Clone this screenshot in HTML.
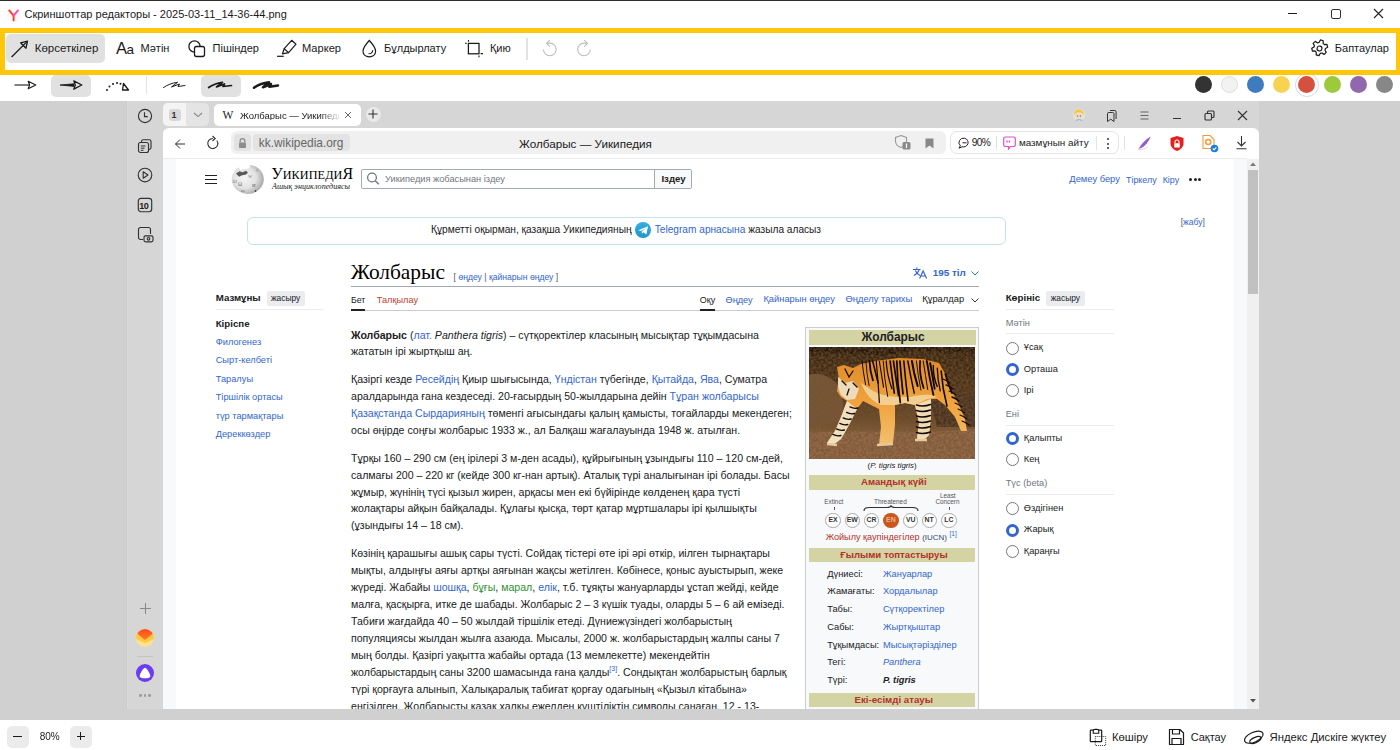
<!DOCTYPE html><html><head><meta charset="utf-8"><style>
html,body{margin:0;padding:0}
body{width:1400px;height:750px;position:relative;overflow:hidden;background:#fff;font-family:"Liberation Sans",sans-serif}
.t{position:absolute;white-space:nowrap;line-height:1}
.r{position:absolute}
a{color:inherit;text-decoration:none}
</style></head><body>
<div class="r" style="left:0px;top:0px;width:1400px;height:1px;background:#2e2e2e;"></div>
<svg class="r" style="left:6px;top:7px;" width="16" height="16" viewBox="0 0 16 16" fill="none"><circle cx="7.7" cy="8" r="7.5" fill="#f9f9f9"/><path d="M3.2 3.4L7.6 8.6V13.4" stroke="#ff3a24" stroke-width="1.9" stroke-linecap="round" stroke-linejoin="round" fill="none"/><path d="M12 3.4L7.6 8.6" stroke="#ff4d9a" stroke-width="1.9" stroke-linecap="round"/></svg>
<div class="t" style="left:24.5px;top:9.09px;font-size:11px;color:#1a1a1a;font-weight:400;font-family:'Liberation Sans';font-style:normal;">Скриншоттар редакторы - 2025-03-11_14-36-44.png</div>
<div class="r" style="left:1288px;top:13px;width:9px;height:1px;background:#1a1a1a;"></div>
<div class="r" style="left:1331px;top:9px;width:8px;height:8px;background:transparent;border:1px solid #333;border-radius:2px"></div>
<svg class="r" style="left:1373px;top:8px;" width="11" height="11" viewBox="0 0 11 11" fill="none"><path d="M1 1L10 10M10 1L1 10" stroke="#222" stroke-width="1.1"/></svg>
<div class="r" style="left:0px;top:28px;width:1400px;height:47px;background:transparent;box-sizing:border-box;border:5px solid #ffc70c;border-right-width:4px"></div>
<div class="r" style="left:6px;top:34px;width:99px;height:29px;background:#e1e1e1;border-radius:5px"></div>
<svg class="r" style="left:10px;top:39px;" width="20" height="20" viewBox="0 0 20 20" fill="none"><path d="M1.6 18L17 2.6" stroke="#1a1a1a" stroke-width="1.3"/><path d="M17.5 2.2L16 9.2L10.6 3.8Z" stroke="#1a1a1a" stroke-width="1.3" stroke-linejoin="round" fill="none"/></svg>
<div class="t" style="left:34.7px;top:42.77px;font-size:11.5px;color:#1a1a1a;font-weight:400;font-family:'Liberation Sans';font-style:normal;">Көрсеткілер</div>
<div class="t" style="left:116px;top:40.03px;font-size:16.5px;color:#1a1a1a;font-weight:400;font-family:'Liberation Sans';font-style:normal;transform:scaleX(1.0)">A</div>
<div class="t" style="left:126.5px;top:42.57px;font-size:13.5px;color:#1a1a1a;font-weight:400;font-family:'Liberation Sans';font-style:normal;">a</div>
<div class="t" style="left:140.6px;top:43.09px;font-size:11px;color:#1a1a1a;font-weight:400;font-family:'Liberation Sans';font-style:normal;">Мәтін</div>
<svg class="r" style="left:188px;top:40px;" width="18" height="18" viewBox="0 0 18 18" fill="none"><circle cx="6.5" cy="6.5" r="5.6" stroke="#1a1a1a" stroke-width="1.3"/><rect x="6.5" y="6.5" width="10" height="10" rx="2" fill="#fff" stroke="#1a1a1a" stroke-width="1.3"/></svg>
<div class="t" style="left:212.6px;top:43.09px;font-size:11px;color:#1a1a1a;font-weight:400;font-family:'Liberation Sans';font-style:normal;">Пішіндер</div>
<svg class="r" style="left:275px;top:38px;" width="24" height="21" viewBox="0 0 24 21" fill="none"><path d="M16.7 2.3L21 6.2L13.6 14.6L9.2 10.7Z" stroke="#1a1a1a" stroke-width="1.2" stroke-linejoin="round"/><path d="M9.2 10.7L7.5 15.8L13.6 14.6" stroke="#1a1a1a" stroke-width="1.2" stroke-linejoin="round"/><path d="M2.1 18.3H8.7" stroke="#1a1a1a" stroke-width="1.2"/></svg>
<div class="t" style="left:302px;top:42.50px;font-size:11.1px;color:#1a1a1a;font-weight:400;font-family:'Liberation Sans';font-style:normal;">Маркер</div>
<svg class="r" style="left:360px;top:39px;" width="17" height="20" viewBox="0 0 17 20" fill="none"><path d="M9.3 1.5C9.3 1.5 3 8.2 3 12.3C3 15.6 5.8 17.8 9.3 17.8C12.8 17.8 15.6 15.6 15.6 12.3C15.6 8.2 9.3 1.5 9.3 1.5Z" stroke="#1a1a1a" stroke-width="1.2"/><path d="M8.5 14.8C10.8 14.8 12.6 13.2 12.8 11.2" stroke="#1a1a1a" stroke-width="1.1"/></svg>
<div class="t" style="left:384px;top:43.09px;font-size:11px;color:#1a1a1a;font-weight:400;font-family:'Liberation Sans';font-style:normal;">Бұлдырлату</div>
<svg class="r" style="left:464px;top:39px;" width="20" height="20" viewBox="0 0 20 20" fill="none"><rect x="4.4" y="4.4" width="10.6" height="10.4" stroke="#1a1a1a" stroke-width="1.25"/><path d="M4.5 1V2.8M1 4.3H2.8M16.6 14.6H19M15 16.4V18.3" stroke="#1a1a1a" stroke-width="1.1"/></svg>
<div class="t" style="left:489.9px;top:42.99px;font-size:11px;color:#1a1a1a;font-weight:400;font-family:'Liberation Sans';font-style:normal;">Қию</div>
<div class="r" style="left:526px;top:38px;width:1.5px;height:22px;background:#e3e3e3;"></div>
<svg class="r" style="left:541px;top:40px;" width="17" height="17" viewBox="0 0 17 17" fill="none"><path d="M2.5 9.4A6.3 6.3 0 1 0 8.8 3.1H5.6M9 0.2L5.6 3.3L9 6.6" stroke="#bdbdbd" stroke-width="1.1" stroke-linejoin="round" fill="none"/></svg>
<svg class="r" style="left:576px;top:40px;" width="17" height="17" viewBox="0 0 17 17" fill="none"><path d="M14.3 9.4A6.3 6.3 0 1 1 8.2 3.1H11.6M8.2 0.2L11.6 3.3L8.2 6.6" stroke="#bdbdbd" stroke-width="1.1" stroke-linejoin="round" fill="none"/></svg>
<svg class="r" style="left:1310px;top:39px;" width="19" height="19" viewBox="0 0 19 19" fill="none"><g transform="rotate(16 9.5 9.5) translate(9.5 9.5) scale(1.06) translate(-9.5 -9.5)"><path d="M8.1 1.5h2.8l.5 2.3 1.6.9 2.2-.8 1.4 2.4-1.7 1.6v1.8l1.7 1.6-1.4 2.4-2.2-.8-1.6.9-.5 2.3H8.1l-.5-2.3-1.6-.9-2.2.8-1.4-2.4 1.7-1.6V8.1L2.4 6.5l1.4-2.4 2.2.8 1.6-.9z" stroke="#1a1a1a" stroke-width="1.15" stroke-linejoin="round"/><circle cx="9.5" cy="9.5" r="2.3" stroke="#1a1a1a" stroke-width="1.1"/></g></svg>
<div class="t" style="left:1334.8px;top:43.09px;font-size:11px;color:#1a1a1a;font-weight:400;font-family:'Liberation Sans';font-style:normal;">Баптаулар</div>
<div class="r" style="left:51px;top:75px;width:40px;height:22px;background:#e1e1e1;border-radius:5px"></div>
<div class="r" style="left:201px;top:75px;width:40px;height:22px;background:#e1e1e1;border-radius:5px"></div>
<div class="r" style="left:145.5px;top:76px;width:1px;height:18px;background:#e3e3e3;"></div>
<svg class="r" style="left:13px;top:78px;" width="26" height="14" viewBox="0 0 26 14" fill="none"><path d="M1.5 7H16" stroke="#1a1a1a" stroke-width="1.1"/><path d="M15.2 3.2L22.8 7L15.2 10.8L16.6 7Z" stroke="#1a1a1a" stroke-width="1.1" stroke-linejoin="round"/></svg>
<svg class="r" style="left:59px;top:78px;" width="26" height="14" viewBox="0 0 26 14" fill="none"><path d="M1 7L15 5.8V8.4Z" fill="#1a1a1a" stroke="#1a1a1a" stroke-width="0.8" stroke-linejoin="round"/><path d="M14.8 2.8L22.8 7L14.8 11.2L16.3 7Z" stroke="#1a1a1a" stroke-width="1.3" stroke-linejoin="round"/></svg>
<svg class="r" style="left:105px;top:77px;" width="26" height="16" viewBox="0 0 26 16" fill="none"><circle cx="2" cy="13" r="1" fill="#1a1a1a"/><circle cx="4.5" cy="9.5" r="1" fill="#1a1a1a"/><circle cx="8" cy="7" r="1" fill="#1a1a1a"/><circle cx="12" cy="6" r="1" fill="#1a1a1a"/><circle cx="15.5" cy="6.8" r="1" fill="#1a1a1a"/><path d="M18.5 6.5L23.5 13H17.5Z" stroke="#1a1a1a" stroke-width="1.3" stroke-linejoin="round"/></svg>
<svg class="r" style="left:160px;top:78px;" width="28" height="14" viewBox="0 0 28 14" fill="none"><path d="M3.5 9.5C7 7 12 5 17.5 4.3L11.5 9L19.5 6L18 8.5L25 7.5" stroke="#1a1a1a" stroke-width="1" stroke-linecap="round" stroke-linejoin="round"/></svg>
<svg class="r" style="left:207px;top:78px;" width="28" height="14" viewBox="0 0 28 14" fill="none"><path d="M1.6 9.5C5 7 10 5 15.5 4.3L9.5 9L17.5 6L16 8.5L24.5 7.5" stroke="#1a1a1a" stroke-width="1.7" stroke-linecap="round" stroke-linejoin="round"/></svg>
<svg class="r" style="left:252px;top:78px;" width="30" height="14" viewBox="0 0 30 14" fill="none"><path d="M2 9.8C6 7 11 5 17 4.3L11 9.3L19 6L17.5 8.8L26 7.5" stroke="#1a1a1a" stroke-width="2.5" stroke-linecap="round" stroke-linejoin="round"/></svg>
<div class="r" style="left:1195.1px;top:76.3px;width:17px;height:17px;background:#333333;border-radius:50%;"></div>
<div class="r" style="left:1221.0px;top:76.3px;width:17px;height:17px;background:#f2f2f2;border-radius:50%;border:1px solid #dedede;box-sizing:border-box;"></div>
<div class="r" style="left:1246.8px;top:76.3px;width:17px;height:17px;background:#3f7bbf;border-radius:50%;"></div>
<div class="r" style="left:1272.5px;top:76.3px;width:17px;height:17px;background:#f8d352;border-radius:50%;"></div>
<div class="r" style="left:1298.2px;top:76.3px;width:17px;height:17px;background:#d6503f;border-radius:50%;"></div>
<div class="r" style="left:1323.9px;top:76.3px;width:17px;height:17px;background:#9dc93c;border-radius:50%;"></div>
<div class="r" style="left:1349.7px;top:76.3px;width:17px;height:17px;background:#9168ad;border-radius:50%;"></div>
<div class="r" style="left:1375.5px;top:76.3px;width:17px;height:17px;background:#878787;border-radius:50%;"></div>
<div class="r" style="left:1294.9px;top:72.9px;width:23.7px;height:23.7px;background:transparent;border-radius:50%;box-sizing:border-box;border:1.5px solid #d9d9d9"></div>
<div class="r" style="left:0px;top:73px;width:1400px;height:2px;background:#ffc70c;"></div>
<div class="r" style="left:0px;top:101px;width:1400px;height:619px;background:#d0d0d0;"></div>
<div class="r" style="left:7px;top:725.7px;width:22px;height:22px;background:#ebebeb;border-radius:5px"></div>
<div class="r" style="left:13px;top:736px;width:9px;height:1.3px;background:#1a1a1a;"></div>
<div class="t" style="left:39.7px;top:732.13px;font-size:10px;color:#1a1a1a;font-weight:400;font-family:'Liberation Sans';font-style:normal;transform:scaleY(1.15);transform-origin:0 85%">80%</div>
<div class="r" style="left:70.2px;top:725.7px;width:22px;height:22px;background:#ebebeb;border-radius:5px"></div>
<div class="r" style="left:76.5px;top:736px;width:8.6px;height:1.3px;background:#1a1a1a;"></div>
<div class="r" style="left:80.2px;top:731.7px;width:1.3px;height:8.6px;background:#1a1a1a;"></div>
<svg class="r" style="left:1088px;top:728px;" width="20" height="20" viewBox="0 0 20 20" fill="none"><rect x="2.3" y="2.2" width="11.4" height="11.5" rx="0.8" stroke="#1a1a1a" stroke-width="1.2"/><path d="M5.2 5.3V3.2A1.8 1.8 0 0 1 7 1.4H9A1.8 1.8 0 0 1 10.8 3.2V5.3Z" fill="#fff" stroke="#1a1a1a" stroke-width="1.1"/><path d="M7.3 8.5H17.7V17.5H7.3Z" stroke="#1a1a1a" stroke-width="1" stroke-dasharray="1 1" opacity="0.85"/></svg>
<div class="t" style="left:1112px;top:731.72px;font-size:11.2px;color:#1a1a1a;font-weight:400;font-family:'Liberation Sans';font-style:normal;">Көшіру</div>
<svg class="r" style="left:1168px;top:728px;" width="17" height="18" viewBox="0 0 17 18" fill="none"><path d="M1.5 1.5H12L15.5 5V16.5H1.5Z" stroke="#1a1a1a" stroke-width="1.2" stroke-linejoin="round"/><path d="M4.5 1.5V6H11.5V1.5" stroke="#1a1a1a" stroke-width="1.2"/><path d="M4 16.5V10.5H13V16.5" stroke="#1a1a1a" stroke-width="1.2"/></svg>
<div class="t" style="left:1190.7px;top:731.89px;font-size:11px;color:#1a1a1a;font-weight:400;font-family:'Liberation Sans';font-style:normal;">Сақтау</div>
<svg class="r" style="left:1243px;top:729px;" width="22" height="16" viewBox="0 0 22 16" fill="none"><ellipse cx="10.8" cy="8.2" rx="10" ry="4.9" transform="rotate(-24 10.8 8.2)" stroke="#1a1a1a" stroke-width="1.2"/><ellipse cx="12.4" cy="11" rx="6" ry="2.6" transform="rotate(-24 12.4 11)" stroke="#1a1a1a" stroke-width="1.1"/></svg>
<div class="t" style="left:1269.5px;top:731.63px;font-size:11.3px;color:#1a1a1a;font-weight:400;font-family:'Liberation Sans';font-style:normal;">Яндекс Дискіге жүктеу</div>
<div class="r" style="left:126px;top:101px;width:1133px;height:608px;background:#d6d6d6;"></div>
<div class="r" style="left:126px;top:101px;width:1px;height:608px;background:#cccccc;"></div>
<div class="r" style="left:127px;top:101px;width:1px;height:608px;background:#dadada;"></div>
<div class="r" style="left:163px;top:128px;width:1096px;height:581px;background:#fff;border-radius:6px 6px 0 0"></div>
<div class="r" style="left:163px;top:157.5px;width:1084px;height:1px;background:#ececec;"></div>
<div class="r" style="left:163px;top:158.5px;width:12.6px;height:551px;background:#f8f9fa;"></div>
<div class="r" style="left:1234px;top:158.5px;width:13px;height:551px;background:#f8f9fa;"></div>
<div class="r" style="left:1247px;top:158.5px;width:12px;height:551px;background:#f0f0f0;"></div>
<div class="r" style="left:1247.8px;top:170.3px;width:10.2px;height:124px;background:#c1c1c1;"></div>
<svg class="r" style="left:1249px;top:161px;" width="8" height="6" viewBox="0 0 8 6" fill="none"><path d="M1 5L4 1.5L7 5Z" fill="#777"/></svg>
<svg class="r" style="left:1249px;top:698px;" width="8" height="6" viewBox="0 0 8 6" fill="none"><path d="M1 1L4 4.5L7 1Z" fill="#555"/></svg>
<svg class="r" style="left:137px;top:108px;" width="16" height="16" viewBox="0 0 16 16" fill="none"><circle cx="8" cy="8" r="6.6" stroke="#333" stroke-width="1.15" fill="none"/><path d="M7.5 4.2V8.6H10.8" stroke="#333" stroke-width="1.15" fill="none"/></svg>
<svg class="r" style="left:137px;top:138px;" width="17" height="17" viewBox="0 0 17 17" fill="none"><rect x="1.5" y="4.5" width="10" height="10" rx="2" stroke="#333" stroke-width="1.15" fill="none"/><path d="M4.5 4.5V3.5A1.8 1.8 0 0 1 6.3 1.7H12.2A1.8 1.8 0 0 1 14 3.5V9.5A1.8 1.8 0 0 1 12.2 11.3H11.5" stroke="#333" stroke-width="1.15" fill="none"/><path d="M3.8 8H8.5M3.8 10.2H7.5M3.8 12.3H6.5" stroke="#333" stroke-width="1"/></svg>
<svg class="r" style="left:137px;top:167px;" width="16" height="16" viewBox="0 0 16 16" fill="none"><circle cx="8" cy="8" r="6.8" stroke="#333" stroke-width="1.15" fill="none"/><path d="M6.2 4.8L11 8L6.2 11.2Z" stroke="#333" stroke-width="1.15" fill="none" stroke-linejoin="round"/></svg>
<svg class="r" style="left:137px;top:197px;" width="16" height="16" viewBox="0 0 16 16" fill="none"><rect x="1.3" y="1.3" width="13.4" height="13.4" rx="2.6" stroke="#333" stroke-width="1.15" fill="none"/></svg>
<div class="t" style="left:139.3px;top:201.58px;font-size:9px;color:#222;font-weight:700;font-family:'Liberation Sans';font-style:normal;letter-spacing:-0.6px;">10</div>
<svg class="r" style="left:137px;top:226px;" width="17" height="17" viewBox="0 0 17 17" fill="none"><path d="M6 13.5H3.5A2 2 0 0 1 1.5 11.5V3.5A2 2 0 0 1 3.5 1.5H11.5A2 2 0 0 1 13.5 3.5V8" stroke="#333" stroke-width="1.15" fill="none"/><rect x="7" y="9.8" width="9" height="6" rx="1.5" stroke="#333" stroke-width="1.15" fill="none"/><circle cx="11.5" cy="12.8" r="1.3" stroke="#333" stroke-width="1.15" fill="none"/></svg>
<svg class="r" style="left:139px;top:602px;" width="13" height="13" viewBox="0 0 13 13" fill="none"><path d="M6.5 1V12M1 6.5H12" stroke="#8a8a8a" stroke-width="1.1"/></svg>
<svg class="r" style="left:136px;top:629px;" width="18" height="18" viewBox="0 0 18 18" fill="none"><defs><clipPath id="mc"><circle cx="9" cy="9" r="9"/></clipPath><linearGradient id="mg" x1="0" y1="0" x2="0" y2="1"><stop offset="0" stop-color="#ff4a1c"/><stop offset="1" stop-color="#ff7a22"/></linearGradient></defs><g clip-path="url(#mc)"><rect width="18" height="18" fill="#ffe08c"/><path d="M0 3L9 10.5L18 3V10L9 14L0 10Z" fill="#ffc940"/><path d="M0 0H18V3.5L9 11L0 3.5Z" fill="url(#mg)"/></g></svg>
<div class="r" style="left:137px;top:655.5px;width:16px;height:1px;background:#c4c4c4;"></div>
<svg class="r" style="left:136px;top:664px;" width="18" height="18" viewBox="0 0 18 18" fill="none"><circle cx="9" cy="9" r="9" fill="#6a3cf2"/><path d="M9 3.8C10.6 3.8 14.3 9.8 14.3 12C14.3 13.9 12 14.3 9 14.3C6 14.3 3.7 13.9 3.7 12C3.7 9.8 7.4 3.8 9 3.8Z" fill="#fff"/></svg>
<div class="r" style="left:138.9px;top:694px;width:2.8px;height:2.8px;background:#9a9a9a;border-radius:50%"></div>
<div class="r" style="left:143.5px;top:694px;width:2.8px;height:2.8px;background:#9a9a9a;border-radius:50%"></div>
<div class="r" style="left:148.1px;top:694px;width:2.8px;height:2.8px;background:#9a9a9a;border-radius:50%"></div>
<div class="r" style="left:163px;top:103.4px;width:46px;height:23px;background:#e4e4e4;border-radius:5px"></div>
<div class="r" style="left:163px;top:103.4px;width:23px;height:23px;background:#f4f4f4;border-radius:5px 0 0 5px"></div>
<div class="r" style="left:168.6px;top:109px;width:12px;height:12px;background:#d8d8d8;border-radius:3px"></div>
<div class="t" style="left:171.4px;top:110.98px;font-size:9px;color:#333;font-weight:700;font-family:'Liberation Sans';font-style:normal;">1</div>
<svg class="r" style="left:193px;top:112px;" width="10" height="6" viewBox="0 0 10 6" fill="none"><path d="M1 1L5 4.6L9 1" stroke="#888" stroke-width="1.1"/></svg>
<div class="r" style="left:213.6px;top:103.6px;width:147px;height:22.8px;background:#fff;border-radius:5px"></div>
<div class="t" style="left:222.5px;top:109.87px;font-size:11.5px;color:#222;font-weight:400;font-family:'Liberation Serif';font-style:normal;letter-spacing:-1.5px">W</div>
<div class="t" style="left:240px;top:110.86px;font-size:9.5px;color:#222;font-weight:400;font-family:'Liberation Sans';font-style:normal;width:101px;overflow:hidden;-webkit-mask-image:linear-gradient(90deg,#000 80%,transparent)">Жолбарыс — Уикипеди</div>
<svg class="r" style="left:344px;top:110.5px;" width="8" height="8" viewBox="0 0 8 8" fill="none"><path d="M1 1L7 7M7 1L1 7" stroke="#555" stroke-width="0.9"/></svg>
<div class="r" style="left:365.7px;top:106.6px;width:15.4px;height:15.4px;background:#e9e9e9;border-radius:50%"></div>
<svg class="r" style="left:368.4px;top:109.3px;" width="10" height="10" viewBox="0 0 10 10" fill="none"><path d="M5 0.5V9.5M0.5 5H9.5" stroke="#333" stroke-width="1.1"/></svg>
<svg class="r" style="left:1072px;top:108px;" width="14" height="14" viewBox="0 0 14 14" fill="none"><circle cx="7" cy="7" r="6.2" fill="#e9e2cf"/><path d="M2 7.5C1.8 3.5 4 1.5 7 1.5C10 1.5 12.2 3.5 12 7.5C11 5.5 9.5 4.5 7 4.5C4.5 4.5 3 5.5 2 7.5Z" fill="#f0c94a"/><ellipse cx="7" cy="8.2" rx="3.6" ry="3.8" fill="#f6dcc0"/><circle cx="5.6" cy="8" r="0.8" fill="#3b82c4"/><circle cx="8.4" cy="8" r="0.8" fill="#3b82c4"/><path d="M4 12.5C5 11.5 9 11.5 10 12.5" stroke="#7fb3d8" stroke-width="1.2"/></svg>
<svg class="r" style="left:1105px;top:108.5px;" width="13" height="14" viewBox="0 0 13 14" fill="none"><path d="M2.5 4.8A1.3 1.3 0 0 1 3.8 3.5H7.7A1.3 1.3 0 0 1 9 4.8V12.5L5.75 10.2L2.5 12.5Z" stroke="#333" stroke-width="1"/><path d="M5 1.5H9.8A1.3 1.3 0 0 1 11.1 2.8V10" stroke="#333" stroke-width="1"/></svg>
<svg class="r" style="left:1139px;top:109.5px;" width="11" height="11" viewBox="0 0 11 11" fill="none"><path d="M1.5 2H9.5M1.5 5.5H9.5M1.5 9H9.5" stroke="#666" stroke-width="1.1"/></svg>
<div class="r" style="left:1172.9px;top:118.3px;width:7.8px;height:1.1px;background:#333;"></div>
<svg class="r" style="left:1204px;top:109.5px;" width="11" height="11" viewBox="0 0 11 11" fill="none"><rect x="1" y="3.5" width="6.5" height="6.5" rx="1" stroke="#333" stroke-width="1.15" fill="none"/><path d="M3.5 3.5V2A1 1 0 0 1 4.5 1H9A1 1 0 0 1 10 2V6.5A1 1 0 0 1 9 7.5H7.5" stroke="#333" stroke-width="1.15" fill="none"/></svg>
<svg class="r" style="left:1236.5px;top:110px;" width="11" height="11" viewBox="0 0 11 11" fill="none"><path d="M1 1L10 10M10 1L1 10" stroke="#333" stroke-width="1.1"/></svg>
<svg class="r" style="left:174px;top:137.5px;" width="12" height="12" viewBox="0 0 12 12" fill="none"><path d="M11 6H1.5M6 1.5L1.5 6L6 10.5" stroke="#222" stroke-width="0.95"/></svg>
<svg class="r" style="left:206px;top:135px;" width="14" height="15" viewBox="0 0 14 15" fill="none"><path d="M10.8 5.5A5 5 0 1 1 7 3.5" stroke="#333" stroke-width="1.1"/><path d="M6.5 1L9.2 3.5L6.5 6" stroke="#333" stroke-width="1.1"/></svg>
<div class="r" style="left:231px;top:131.4px;width:715.4px;height:22.9px;background:#f0f0f0;border-radius:6px"></div>
<div class="r" style="left:234px;top:134px;width:17px;height:17px;background:#e2e2e2;border-radius:4px"></div>
<svg class="r" style="left:237px;top:137px;" width="11" height="12" viewBox="0 0 11 12" fill="none"><path d="M3.2 5.5V4A2.3 2.3 0 0 1 7.8 4V5.5" stroke="#8c8c8c" stroke-width="1.3"/><rect x="2" y="5.5" width="7" height="5.5" rx="1" fill="#8c8c8c"/></svg>
<div class="r" style="left:253px;top:134.3px;width:97px;height:17.1px;background:#e3e3e3;border-radius:4px"></div>
<div class="t" style="left:258.8px;top:138.33px;font-size:11.9px;color:#666;font-weight:400;font-family:'Liberation Sans';font-style:normal;">kk.wikipedia.org</div>
<div class="t" style="left:519px;top:137.70px;font-size:11.7px;color:#1a1a1a;font-weight:400;font-family:'Liberation Sans';font-style:normal;">Жолбарыс — Уикипедия</div>
<svg class="r" style="left:894px;top:134px;" width="18" height="16" viewBox="0 0 18 16" fill="none"><path d="M7 1.5L12.5 3.5V7C12.5 10.5 10 12.5 7 13.5C4 12.5 1.5 10.5 1.5 7V3.5Z" stroke="#999" stroke-width="1.1"/><rect x="8.5" y="8" width="8" height="7.5" rx="1.5" fill="#8a8a8a"/><path d="M12.5 9.5V14" stroke="#fff" stroke-width="1.2"/></svg>
<svg class="r" style="left:925px;top:137.5px;" width="9" height="11" viewBox="0 0 9 11" fill="none"><path d="M0.5 0.5H8.5V10.5L4.5 7.5L0.5 10.5Z" fill="#888"/></svg>
<div class="r" style="left:950px;top:131.4px;width:169px;height:22.9px;background:#fff;border-radius:7px;box-sizing:border-box;border:1px solid #e3e3e3"></div>
<svg class="r" style="left:958px;top:137px;" width="12" height="12" viewBox="0 0 12 12" fill="none"><path d="M6.5 1.2A4.8 4.4 0 1 1 4 9.8L1 11.2L2.3 8.6A4.8 4.4 0 0 1 6.5 1.2Z" stroke="#222" stroke-width="1"/><path d="M4.5 5.8H8.5" stroke="#222" stroke-width="1"/></svg>
<div class="t" style="left:971.7px;top:137.97px;font-size:10.2px;color:#1a1a1a;font-weight:400;font-family:'Liberation Sans';font-style:normal;letter-spacing:-0.6px">90%</div>
<div class="r" style="left:996px;top:136px;width:1px;height:14px;background:#e3e3e3;"></div>
<svg class="r" style="left:1003px;top:136px;" width="13" height="14" viewBox="0 0 13 14" fill="none"><path d="M2.5 1H10.5A1.8 1.8 0 0 1 12.3 2.8V8.7A1.8 1.8 0 0 1 10.5 10.5H7.5L5.5 13V10.5H2.5A1.8 1.8 0 0 1 0.7 8.7V2.8A1.8 1.8 0 0 1 2.5 1Z" stroke="#e84ce0" stroke-width="1.2"/><path d="M4 4.5V6.5M6.5 4.5V6.5" stroke="#e84ce0" stroke-width="1.4"/></svg>
<div class="t" style="left:1018.9px;top:138.22px;font-size:9.9px;color:#1a1a1a;font-weight:400;font-family:'Liberation Sans';font-style:normal;">мазмұнын айту</div>
<div class="r" style="left:1096px;top:136px;width:1px;height:14px;background:#e3e3e3;"></div>
<div class="r" style="left:1107px;top:138px;width:2px;height:2px;background:#333;border-radius:50%"></div>
<div class="r" style="left:1107px;top:142.5px;width:2px;height:2px;background:#333;border-radius:50%"></div>
<div class="r" style="left:1107px;top:147px;width:2px;height:2px;background:#333;border-radius:50%"></div>
<div class="r" style="left:1123.6px;top:136px;width:1px;height:14px;background:#e3e3e3;"></div>
<svg class="r" style="left:1136px;top:135px;" width="16" height="16" viewBox="0 0 16 16" fill="none"><path d="M2.5 14C6 8 10 4 14.5 1.5C13 6 10 11 4 13.5Z" fill="#9b59d6"/><path d="M2 14.5C5 15 9 14 12 12" stroke="#ccc" stroke-width="0.8"/></svg>
<svg class="r" style="left:1169px;top:135px;" width="16" height="17" viewBox="0 0 16 17" fill="none"><path d="M8 1L14.5 3V8.5C14.5 12 11.5 14.5 8 16C4.5 14.5 1.5 12 1.5 8.5V3Z" fill="#e61e1e"/><path d="M6 8.2V7A2 2 0 0 1 10 7V8.2" stroke="#fff" stroke-width="1.1"/><rect x="5.2" y="8.2" width="5.6" height="4.3" rx="0.6" fill="#fff"/></svg>
<svg class="r" style="left:1201px;top:134px;" width="18" height="19" viewBox="0 0 18 19" fill="none"><path d="M2 1.5H9L13 5.5V14.5H2Z" stroke="#f39a3c" stroke-width="1.1"/><circle cx="7.2" cy="8" r="2.5" stroke="#f39a3c" stroke-width="1.5"/><circle cx="13.5" cy="14.5" r="3.8" fill="#1a7fe0"/><path d="M11.8 14.5L13.1 15.8L15.3 13.3" stroke="#fff" stroke-width="1.1"/></svg>
<svg class="r" style="left:1235px;top:135px;" width="13" height="15" viewBox="0 0 13 15" fill="none"><path d="M6.5 1V11M2.5 7L6.5 11L10.5 7M1.5 13.8H11.5" stroke="#333" stroke-width="1.1"/></svg>
<div class="r" style="left:205px;top:174.8px;width:12.3px;height:1.6px;background:#202122;"></div>
<div class="r" style="left:205px;top:178.8px;width:12.3px;height:1.6px;background:#202122;"></div>
<div class="r" style="left:205px;top:182.8px;width:12.3px;height:1.6px;background:#202122;"></div>
<svg class="r" style="left:231px;top:164px;" width="34" height="31" viewBox="0 0 34 31" fill="none"><defs><radialGradient id="gl" cx="0.4" cy="0.45" r="0.6"><stop offset="0" stop-color="#f6f6f6"/><stop offset="0.6" stop-color="#e2e2e2"/><stop offset="1" stop-color="#a9a9a9"/></radialGradient></defs><ellipse cx="16.8" cy="15.3" rx="16" ry="14.6" fill="url(#gl)"/><path d="M9 0L19.5 0L18.5 4L15 5.3L12 4.8L9.5 6.3L7.5 3Z" fill="#fff"/><path d="M5 9.5L8.5 7.3L11.5 8.3L15 6.8L17 8.8L14.5 10.8L11 11.3L8 12.8Z" fill="#5a5a5a"/><text x="7" y="22" font-size="5.5" fill="#6a6a6a" font-family="Liberation Serif">Ω</text><text x="17" y="14" font-size="4.5" fill="#777" font-family="Liberation Serif">W</text><text x="21" y="23" font-size="5" fill="#666" font-family="Liberation Serif">И</text><text x="10" y="28" font-size="4.5" fill="#777" font-family="Liberation Serif">ш</text><text x="1.5" y="19" font-size="4.5" fill="#888" font-family="Liberation Serif">Ш</text><circle cx="24.5" cy="27" r="0.9" fill="#444"/><text x="25" y="6.5" font-size="4" fill="#888" font-family="Liberation Serif">ρ</text></svg>
<div class="t" style="left:271.4px;top:166px;font-family:'Liberation Serif';font-size:15.8px;color:#000;letter-spacing:0.1px">У<span style="font-size:12.2px">ИКИПЕДИ</span>Я</div>
<div class="t" style="left:272px;top:183.02px;font-size:8.1px;color:#222;font-weight:400;font-family:'Liberation Serif';font-style:italic;">Ашық энциклопедиясы</div>
<div class="r" style="left:360.7px;top:169px;width:331px;height:20.3px;background:#fff;box-sizing:border-box;border:1px solid #a2a9b1;border-radius:2px"></div>
<div class="r" style="left:653.6px;top:170px;width:36px;height:18.3px;background:#f8f9fa;border-left:1px solid #a2a9b1"></div>
<svg class="r" style="left:366px;top:171px;" width="15" height="16" viewBox="0 0 15 16" fill="none"><circle cx="6" cy="6.5" r="4.4" stroke="#72777d" stroke-width="1.3"/><path d="M9.2 9.7L12.8 13.3" stroke="#72777d" stroke-width="1.4"/></svg>
<div class="t" style="left:385.1px;top:174.96px;font-size:9.26px;color:#72777d;font-weight:400;font-family:'Liberation Sans';font-style:normal;">Уикипедия жобасынан іздеу</div>
<div class="t" style="left:661.4px;top:174.49px;font-size:9.7px;color:#202122;font-weight:700;font-family:'Liberation Sans';font-style:normal;">Іздеу</div>
<div class="t" style="left:1069.3px;top:175.27px;font-size:9.37px;color:#3366cc;font-weight:400;font-family:'Liberation Sans';font-style:normal;">Демеу беру</div>
<div class="t" style="left:1126px;top:175.67px;font-size:8.9px;color:#3366cc;font-weight:400;font-family:'Liberation Sans';font-style:normal;">Тіркелу</div>
<div class="t" style="left:1162.7px;top:175.67px;font-size:8.9px;color:#3366cc;font-weight:400;font-family:'Liberation Sans';font-style:normal;">Кіру</div>
<div class="r" style="left:1189.0px;top:177.7px;width:3px;height:3px;background:#202122;border-radius:50%"></div>
<div class="r" style="left:1193.7px;top:177.7px;width:3px;height:3px;background:#202122;border-radius:50%"></div>
<div class="r" style="left:1198.4px;top:177.7px;width:3px;height:3px;background:#202122;border-radius:50%"></div>
<div class="t" style="left:1180.7px;top:218.10px;font-size:8.5px;color:#54595d;font-weight:400;font-family:'Liberation Sans';font-style:normal;">[<span style="color:#3366cc">жабу</span>]</div>
<div class="r" style="left:247.1px;top:217.1px;width:758.6px;height:27.9px;background:#fff;box-sizing:border-box;border:1px solid #c2e3ef;border-radius:6px"></div>
<div class="t" style="left:431.1px;top:224.67px;font-size:10.2px;color:#202122;font-weight:400;font-family:'Liberation Sans';font-style:normal;">Құрметті оқырман, қазақша Уикипедияның</div>
<div class="r" style="left:634.9px;top:221.7px;width:16.5px;height:16.5px;border-radius:50%;background:linear-gradient(#37aee2,#1e96c8)"></div>
<svg class="r" style="left:637.2px;top:225px;" width="12" height="11" viewBox="0 0 12 11" fill="none"><path d="M1.3 5.2L11 1.3L9.4 9.6L6.4 7.3L4.9 8.8L4.7 6.5L9.2 2.9L3.9 6Z" fill="#fff"/></svg>
<div class="t" style="left:654.8px;top:224.71px;font-size:10.15px;color:#3366cc;font-weight:400;font-family:'Liberation Sans';font-style:normal;">Telegram арнасына</div>
<div class="t" style="left:748.3px;top:224.71px;font-size:10.15px;color:#202122;font-weight:400;font-family:'Liberation Sans';font-style:normal;">жазыла аласыз</div>
<div class="t" style="left:350.8px;top:261.78px;font-size:21.4px;color:#000;font-weight:400;font-family:'Liberation Serif';font-style:normal;">Жолбарыс</div>
<div class="t" style="left:453.6px;top:272.72px;font-size:8.6px;color:#54595d;font-weight:400;font-family:'Liberation Sans';font-style:normal;">[ <span style="color:#3366cc">өңдеу</span> | <span style="color:#3366cc">қайнарын өңдеу</span> ]</div>
<div class="r" style="left:351px;top:285.6px;width:628px;height:1px;background:#a2a9b1;"></div>
<svg class="r" style="left:912px;top:265px;" width="16" height="15" viewBox="0 0 16 15" fill="none"><path d="M1 4.5H8.5M4.8 2.6V4.5M1.8 10.5C4.5 9 6.5 7 7.2 4.5M3.3 5.5C4.3 8 6 9.5 8 10.5" stroke="#3366cc" stroke-width="1.1"/><path d="M7.6 13.4L11.1 6L14.6 13.4M8.9 11H13.3" stroke="#3366cc" stroke-width="1.2"/></svg>
<div class="t" style="left:932.8px;top:267.92px;font-size:9.9px;color:#3366cc;font-weight:700;font-family:'Liberation Sans';font-style:normal;">195 тіл</div>
<svg class="r" style="left:970px;top:270px;" width="10" height="7" viewBox="0 0 10 7" fill="none"><path d="M1.5 1.5L5 5L8.5 1.5" stroke="#3366cc" stroke-width="1"/></svg>
<div class="t" style="left:351px;top:295.95px;font-size:8.8px;color:#202122;font-weight:400;font-family:'Liberation Sans';font-style:normal;">Бет</div>
<div class="t" style="left:376.8px;top:295.61px;font-size:9.2px;color:#bf3c2c;font-weight:400;font-family:'Liberation Sans';font-style:normal;">Талқылау</div>
<div class="t" style="left:699.8px;top:295.78px;font-size:9.0px;color:#202122;font-weight:400;font-family:'Liberation Sans';font-style:normal;">Оқу</div>
<div class="t" style="left:725.5px;top:295.61px;font-size:9.2px;color:#3366cc;font-weight:400;font-family:'Liberation Sans';font-style:normal;">Өңдеу</div>
<div class="t" style="left:763.4px;top:295.49px;font-size:9.35px;color:#3366cc;font-weight:400;font-family:'Liberation Sans';font-style:normal;">Қайнарын өңдеу</div>
<div class="t" style="left:845.6px;top:295.49px;font-size:9.35px;color:#3366cc;font-weight:400;font-family:'Liberation Sans';font-style:normal;">Өңделу тарихы</div>
<div class="t" style="left:922.3px;top:295.49px;font-size:9.35px;color:#202122;font-weight:400;font-family:'Liberation Sans';font-style:normal;">Құралдар</div>
<svg class="r" style="left:970px;top:296.5px;" width="10" height="7" viewBox="0 0 10 7" fill="none"><path d="M1.5 1.5L5 5L8.5 1.5" stroke="#333" stroke-width="1"/></svg>
<div class="r" style="left:351px;top:310.3px;width:628px;height:1px;background:#c8ccd1;"></div>
<div class="r" style="left:351px;top:309.3px;width:14.4px;height:2px;background:#202122;"></div>
<div class="r" style="left:699.8px;top:309.3px;width:15.2px;height:2px;background:#202122;"></div>
<div class="t" style="left:215.7px;top:293.39px;font-size:9.7px;color:#202122;font-weight:700;font-family:'Liberation Sans';font-style:normal;">Мазмұны</div>
<div class="r" style="left:266.5px;top:291.4px;width:38.2px;height:14.3px;background:#eaecf0;border-radius:2px"></div>
<div class="t" style="left:271px;top:294.09px;font-size:8.4px;color:#202122;font-weight:400;font-family:'Liberation Sans';font-style:normal;">жасыру</div>
<div class="r" style="left:215.7px;top:309.3px;width:107.8px;height:1px;background:#eaecf0;"></div>
<div class="t" style="left:215.7px;top:318.99px;font-size:9.7px;color:#202122;font-weight:700;font-family:'Liberation Sans';font-style:normal;">Кіріспе</div>
<div class="t" style="left:215.7px;top:337.76px;font-size:9.26px;color:#3366cc;font-weight:400;font-family:'Liberation Sans';font-style:normal;">Филогенез</div>
<div class="t" style="left:215.7px;top:356.21px;font-size:9.26px;color:#3366cc;font-weight:400;font-family:'Liberation Sans';font-style:normal;">Сырт-келбеті</div>
<div class="t" style="left:215.7px;top:374.66px;font-size:9.26px;color:#3366cc;font-weight:400;font-family:'Liberation Sans';font-style:normal;">Таралуы</div>
<div class="t" style="left:215.7px;top:393.11px;font-size:9.26px;color:#3366cc;font-weight:400;font-family:'Liberation Sans';font-style:normal;">Тіршілік ортасы</div>
<div class="t" style="left:215.7px;top:411.56px;font-size:9.26px;color:#3366cc;font-weight:400;font-family:'Liberation Sans';font-style:normal;">түр тармақтары</div>
<div class="t" style="left:215.7px;top:430.01px;font-size:9.26px;color:#3366cc;font-weight:400;font-family:'Liberation Sans';font-style:normal;">Дереккөздер</div>
<div class="t" style="left:1005.7px;top:293.39px;font-size:9.7px;color:#202122;font-weight:700;font-family:'Liberation Sans';font-style:normal;">Көрініс</div>
<div class="r" style="left:1046.2px;top:291.4px;width:38.4px;height:14.3px;background:#eaecf0;border-radius:2px"></div>
<div class="t" style="left:1050.7px;top:294.09px;font-size:8.4px;color:#202122;font-weight:400;font-family:'Liberation Sans';font-style:normal;">жасыру</div>
<div class="r" style="left:1005.7px;top:309.3px;width:108.8px;height:1px;background:#eaecf0;"></div>
<div class="t" style="left:1005.7px;top:318.96px;font-size:9.26px;color:#72777d;font-weight:400;font-family:'Liberation Sans';font-style:normal;">Мәтін</div>
<div class="r" style="left:1005.7px;top:333.3px;width:108.8px;height:1px;background:#eaecf0;"></div>
<div class="r" style="left:1005.8px;top:341.5px;width:13px;height:13px;background:#fff;box-sizing:border-box;border:1px solid #72777d;border-radius:50%"></div>
<div class="t" style="left:1023.8px;top:343.46px;font-size:9.26px;color:#202122;font-weight:400;font-family:'Liberation Sans';font-style:normal;">Ұсақ</div>
<div class="r" style="left:1005.8px;top:362.8px;width:13px;height:13px;background:#fff;box-sizing:border-box;border:3.6px solid #3366cc;border-radius:50%"></div>
<div class="t" style="left:1023.8px;top:364.76px;font-size:9.26px;color:#202122;font-weight:400;font-family:'Liberation Sans';font-style:normal;">Орташа</div>
<div class="r" style="left:1005.8px;top:384.2px;width:13px;height:13px;background:#fff;box-sizing:border-box;border:1px solid #72777d;border-radius:50%"></div>
<div class="t" style="left:1023.8px;top:386.16px;font-size:9.26px;color:#202122;font-weight:400;font-family:'Liberation Sans';font-style:normal;">Ірі</div>
<div class="t" style="left:1005.7px;top:409.66px;font-size:9.26px;color:#72777d;font-weight:400;font-family:'Liberation Sans';font-style:normal;">Ені</div>
<div class="r" style="left:1005.7px;top:424.6px;width:108.8px;height:1px;background:#eaecf0;"></div>
<div class="r" style="left:1005.8px;top:431.8px;width:13px;height:13px;background:#fff;box-sizing:border-box;border:3.6px solid #3366cc;border-radius:50%"></div>
<div class="t" style="left:1023.8px;top:433.76px;font-size:9.26px;color:#202122;font-weight:400;font-family:'Liberation Sans';font-style:normal;">Қалыпты</div>
<div class="r" style="left:1005.8px;top:453.3px;width:13px;height:13px;background:#fff;box-sizing:border-box;border:1px solid #72777d;border-radius:50%"></div>
<div class="t" style="left:1023.8px;top:455.26px;font-size:9.26px;color:#202122;font-weight:400;font-family:'Liberation Sans';font-style:normal;">Кең</div>
<div class="t" style="left:1005.7px;top:479.36px;font-size:9.26px;color:#72777d;font-weight:400;font-family:'Liberation Sans';font-style:normal;">Түс (beta)</div>
<div class="r" style="left:1005.7px;top:493.8px;width:108.8px;height:1px;background:#eaecf0;"></div>
<div class="r" style="left:1005.8px;top:502.3px;width:13px;height:13px;background:#fff;box-sizing:border-box;border:1px solid #72777d;border-radius:50%"></div>
<div class="t" style="left:1023.8px;top:504.26px;font-size:9.26px;color:#202122;font-weight:400;font-family:'Liberation Sans';font-style:normal;">Өздігінен</div>
<div class="r" style="left:1005.8px;top:523.5px;width:13px;height:13px;background:#fff;box-sizing:border-box;border:3.6px solid #3366cc;border-radius:50%"></div>
<div class="t" style="left:1023.8px;top:525.46px;font-size:9.26px;color:#202122;font-weight:400;font-family:'Liberation Sans';font-style:normal;">Жарық</div>
<div class="r" style="left:1005.8px;top:544.7px;width:13px;height:13px;background:#fff;box-sizing:border-box;border:1px solid #72777d;border-radius:50%"></div>
<div class="t" style="left:1023.8px;top:546.66px;font-size:9.26px;color:#202122;font-weight:400;font-family:'Liberation Sans';font-style:normal;">Қараңғы</div>
<div class="t" style="left:351px;top:329.64px;font-size:10.58px;color:#202122;font-weight:400;font-family:'Liberation Sans';font-style:normal;"><b>Жолбарыс</b> (<span style="color:#3366cc">лат.</span> <i>Panthera tigris</i>) – сүтқоректілер класының мысықтар тұқымдасына</div>
<div class="t" style="left:351px;top:346.44px;font-size:10.58px;color:#202122;font-weight:400;font-family:'Liberation Sans';font-style:normal;">жататын ірі жыртқыш аң.</div>
<div class="t" style="left:351px;top:373.74px;font-size:10.58px;color:#202122;font-weight:400;font-family:'Liberation Sans';font-style:normal;">Қазіргі кезде <span style="color:#3366cc">Ресейдің</span> Қиыр шығысында, <span style="color:#3366cc">Үндістан</span> түбегінде, <span style="color:#3366cc">Қытайда</span>, <span style="color:#3366cc">Ява</span>, Суматра</div>
<div class="t" style="left:351px;top:390.94px;font-size:10.58px;color:#202122;font-weight:400;font-family:'Liberation Sans';font-style:normal;">аралдарында ғана кездеседі. 20-ғасырдың 50-жылдарына дейін <span style="color:#3366cc">Тұран жолбарысы</span></div>
<div class="t" style="left:351px;top:407.74px;font-size:10.58px;color:#202122;font-weight:400;font-family:'Liberation Sans';font-style:normal;"><span style="color:#3366cc">Қазақстанда</span> <span style="color:#3366cc">Сырдарияның</span> төменгі ағысындағы қалың қамысты, тоғайларды мекендеген;</div>
<div class="t" style="left:351px;top:424.74px;font-size:10.58px;color:#202122;font-weight:400;font-family:'Liberation Sans';font-style:normal;">осы өңірде соңғы жолбарыс 1933 ж., ал Балқаш жағалауында 1948 ж. атылған.</div>
<div class="t" style="left:351px;top:452.74px;font-size:10.58px;color:#202122;font-weight:400;font-family:'Liberation Sans';font-style:normal;">Тұрқы 160 – 290 см (ең ірілері 3 м-ден асады), құйрығының ұзындығы 110 – 120 см-дей,</div>
<div class="t" style="left:351px;top:469.64px;font-size:10.58px;color:#202122;font-weight:400;font-family:'Liberation Sans';font-style:normal;">салмағы 200 – 220 кг (кейде 300 кг-нан артық). Аталық түрі аналығынан ірі болады. Басы</div>
<div class="t" style="left:351px;top:486.54px;font-size:10.58px;color:#202122;font-weight:400;font-family:'Liberation Sans';font-style:normal;">жұмыр, жүнінің түсі қызыл жирен, арқасы мен екі бүйірінде көлденең қара түсті</div>
<div class="t" style="left:351px;top:503.34px;font-size:10.58px;color:#202122;font-weight:400;font-family:'Liberation Sans';font-style:normal;">жолақтары айқын байқалады. Құлағы қысқа, төрт қатар мұртшалары ірі қылшықты</div>
<div class="t" style="left:351px;top:520.14px;font-size:10.58px;color:#202122;font-weight:400;font-family:'Liberation Sans';font-style:normal;">(ұзындығы 14 – 18 см).</div>
<div class="t" style="left:351px;top:548.14px;font-size:10.58px;color:#202122;font-weight:400;font-family:'Liberation Sans';font-style:normal;">Көзінің қарашығы ашық сары түсті. Сойдақ тістері өте ірі әрі өткір, иілген тырнақтары</div>
<div class="t" style="left:351px;top:565.04px;font-size:10.58px;color:#202122;font-weight:400;font-family:'Liberation Sans';font-style:normal;">мықты, алдыңғы аяғы артқы аяғынан жақсы жетілген. Көбінесе, қоныс ауыстырып, жеке</div>
<div class="t" style="left:351px;top:582.04px;font-size:10.58px;color:#202122;font-weight:400;font-family:'Liberation Sans';font-style:normal;">жүреді. Жабайы <span style="color:#3366cc">шошқа</span>, <span style="color:#2f8f2f">бұғы</span>, <span style="color:#2f8f2f">марал</span>, <span style="color:#3366cc">елік</span>, т.б. тұяқты жануарларды ұстап жейді, кейде</div>
<div class="t" style="left:351px;top:599.04px;font-size:10.58px;color:#202122;font-weight:400;font-family:'Liberation Sans';font-style:normal;">малға, қасқырға, итке де шабады. Жолбарыс 2 – 3 күшік туады, оларды 5 – 6 ай емізеді.</div>
<div class="t" style="left:351px;top:616.04px;font-size:10.58px;color:#202122;font-weight:400;font-family:'Liberation Sans';font-style:normal;">Табиғи жағдайда 40 – 50 жылдай тіршілік етеді. Дүниежүзіндегі жолбарыстың</div>
<div class="t" style="left:351px;top:632.94px;font-size:10.58px;color:#202122;font-weight:400;font-family:'Liberation Sans';font-style:normal;">популяциясы жылдан жылға азаюда. Мысалы, 2000 ж. жолбарыстардың жалпы саны 7</div>
<div class="t" style="left:351px;top:649.84px;font-size:10.58px;color:#202122;font-weight:400;font-family:'Liberation Sans';font-style:normal;">мың болды. Қазіргі уақытта жабайы ортада (13 мемлекетте) мекендейтін</div>
<div class="t" style="left:351px;top:666.64px;font-size:10.58px;color:#202122;font-weight:400;font-family:'Liberation Sans';font-style:normal;">жолбарыстардың саны 3200 шамасында ғана қалды<sup style="font-size:7px;color:#3366cc;vertical-align:0;position:relative;top:-4.5px">[3]</sup>. Сондықтан жолбарыстың барлық</div>
<div class="t" style="left:351px;top:683.54px;font-size:10.58px;color:#202122;font-weight:400;font-family:'Liberation Sans';font-style:normal;">түрі қорғауға алынып, Халықаралық табиғат қорғау одағының «Қызыл кітабына»</div>
<div class="t" style="left:351px;top:700.54px;font-size:10.58px;color:#202122;font-weight:400;font-family:'Liberation Sans';font-style:normal;">енгізілген. Жолбарысты қазақ халқы ежелден күштіліктің символы санаған. 12 - 13-</div>
<div class="r" style="left:805.3px;top:327.1px;width:173.3px;height:390px;background:#f8f9fa;box-sizing:border-box;border:1px solid #c8ccd1"></div>
<div class="r" style="left:808.9px;top:330px;width:166.8px;height:15.4px;background:#d3d3a4;"></div>
<div class="t" style="left:861.6px;top:331.63px;font-size:11.9px;color:#202122;font-weight:700;font-family:'Liberation Sans';font-style:normal;">Жолбарыс</div>
<svg class="r" style="left:809.2px;top:347.3px;" width="166" height="111.6" viewBox="0 0 166 111.6" fill="none">
<defs>
<linearGradient id="bg" x1="0" y1="0" x2="0" y2="1"><stop offset="0" stop-color="#35200f"/><stop offset="0.35" stop-color="#4f3219"/><stop offset="0.65" stop-color="#6e4a2b"/><stop offset="0.8" stop-color="#8d6442"/><stop offset="1" stop-color="#a57d5a"/></linearGradient>
<linearGradient id="tg" x1="0" y1="0" x2="0" y2="1"><stop offset="0" stop-color="#e08a2a"/><stop offset="0.55" stop-color="#f0a540"/><stop offset="1" stop-color="#f3c070"/></linearGradient>
<filter id="nz" x="0" y="0" width="100%" height="100%"><feTurbulence type="fractalNoise" baseFrequency="0.4" numOctaves="2" seed="5"/><feColorMatrix values="0 0 0 0 0.16  0 0 0 0 0.09  0 0 0 0 0.03  0 0 0 -1.8 1.3"/><feComposite in2="SourceGraphic" operator="in"/></filter>
</defs>
<rect width="166" height="112" fill="url(#bg)"/>
<path d="M0 28C10 24 24 30 32 42L36 72C24 78 10 80 0 78Z" fill="#7a5538"/>
<path d="M0 8C30 2 60 12 90 6C120 0 150 8 166 4V0H0Z" fill="#1e120a" opacity="0.8"/>
<path d="M118 40C135 34 152 40 166 48V80H128Z" fill="#4a3020"/>
<path d="M0 86C40 82 100 88 166 82V112H0Z" fill="#96694a"/>
<rect width="166" height="112" fill="#000" filter="url(#nz)" opacity="0.85"/>
<path d="M28 20L35 18L44 21L52 17L66 14L90 11L114 12L130 16L138 30L142 42L150 58L156 72L158 84L152 84L146 70L136 58L128 52L122 52L122 70L120 88L116 92L108 92L110 76L106 58L96 56L86 58L86 78L84 96L70 98L72 80L70 62L62 58L54 54L48 62L40 78L32 92L24 98L18 96L26 84L32 70L38 54L32 50L28 44L30 32Z" fill="url(#tg)"/>
<path d="M38 54L48 62L40 78L32 92L24 98L18 96L26 84L32 70Z" fill="#efe0c0"/>
<path d="M106 58L122 52L122 70L120 88L116 92L108 92L110 76Z" fill="#efdcb4"/>
<path d="M52 36C56 46 62 54 72 58L86 58L96 56L106 58L118 52L128 50C120 46 110 48 100 50C88 50 76 50 64 44Z" fill="#f4d9a8" opacity="0.8"/>
<path d="M29 30L36 36L44 34L50 42L46 52L38 53L32 48L29 40Z" fill="#eddcbc"/>
<path d="M36 22L40 30L44 24M33 34L37 38M44 36L48 40M40 42L38 48" stroke="#1a0e06" stroke-width="1.3" stroke-linecap="round"/>
<path d="M53.0 14.0Q54.3 25.9 56.6 37.8" stroke="#120904" stroke-width="0.98" stroke-linecap="round" fill="none"/><path d="M56.9 14.0Q57.5 26.3 60.1 38.6" stroke="#120904" stroke-width="0.94" stroke-linecap="round" fill="none"/><path d="M60.5 14.0Q60.9 23.6 63.9 33.3" stroke="#120904" stroke-width="1.81" stroke-linecap="round" fill="none"/><path d="M63.6 14.0Q66.5 25.0 69.1 36.0" stroke="#120904" stroke-width="1.53" stroke-linecap="round" fill="none"/><path d="M67.2 14.0Q69.3 34.8 70.4 55.6" stroke="#120904" stroke-width="1.22" stroke-linecap="round" fill="none"/><path d="M70.3 14.0Q72.4 27.1 74.5 40.1" stroke="#120904" stroke-width="1.10" stroke-linecap="round" fill="none"/><path d="M74.2 14.0Q75.3 31.8 78.7 49.5" stroke="#120904" stroke-width="0.97" stroke-linecap="round" fill="none"/><path d="M77.2 14.0Q78.0 27.9 82.9 41.7" stroke="#120904" stroke-width="1.25" stroke-linecap="round" fill="none"/><path d="M81.1 14.0Q83.1 30.1 85.3 46.2" stroke="#120904" stroke-width="1.67" stroke-linecap="round" fill="none"/><path d="M84.4 14.0Q86.9 31.2 89.5 48.3" stroke="#120904" stroke-width="1.70" stroke-linecap="round" fill="none"/><path d="M87.8 14.0Q88.2 34.8 91.3 55.6" stroke="#120904" stroke-width="1.73" stroke-linecap="round" fill="none"/><path d="M90.9 14.0Q92.2 30.4 94.0 46.8" stroke="#120904" stroke-width="1.74" stroke-linecap="round" fill="none"/><path d="M94.8 14.0Q96.5 33.9 99.1 53.8" stroke="#120904" stroke-width="1.55" stroke-linecap="round" fill="none"/><path d="M98.8 14.0Q101.8 30.1 105.2 46.2" stroke="#120904" stroke-width="1.42" stroke-linecap="round" fill="none"/><path d="M102.9 14.0Q104.7 26.5 108.7 39.1" stroke="#120904" stroke-width="1.99" stroke-linecap="round" fill="none"/><path d="M107.4 14.0Q109.0 28.6 111.9 43.1" stroke="#120904" stroke-width="0.92" stroke-linecap="round" fill="none"/><path d="M111.1 14.0Q110.0 27.5 114.6 41.0" stroke="#120904" stroke-width="1.75" stroke-linecap="round" fill="none"/><path d="M114.2 14.0Q116.5 28.2 118.7 42.5" stroke="#120904" stroke-width="0.99" stroke-linecap="round" fill="none"/><path d="M117.8 14.0Q120.4 30.9 124.4 47.9" stroke="#120904" stroke-width="1.85" stroke-linecap="round" fill="none"/><path d="M121.2 16.2Q123.6 29.0 125.6 41.7" stroke="#120904" stroke-width="1.95" stroke-linecap="round" fill="none"/><path d="M124.3 18.4Q124.0 29.0 128.2 39.6" stroke="#120904" stroke-width="1.43" stroke-linecap="round" fill="none"/><path d="M128.3 21.2Q128.6 32.6 131.3 43.9" stroke="#120904" stroke-width="1.31" stroke-linecap="round" fill="none"/><path d="M132.2 24.0Q133.4 41.5 138.0 59.1" stroke="#120904" stroke-width="1.58" stroke-linecap="round" fill="none"/><path d="M136.4 26.9Q138.8 36.3 143.0 45.8" stroke="#120904" stroke-width="1.86" stroke-linecap="round" fill="none"/><path d="M134 32Q137 33 141 36" stroke="#120904" stroke-width="1.31" stroke-linecap="round" fill="none"/><path d="M137 38Q140 39 144 42" stroke="#120904" stroke-width="1.32" stroke-linecap="round" fill="none"/><path d="M140 44Q143 45 147 48" stroke="#120904" stroke-width="1.08" stroke-linecap="round" fill="none"/><path d="M143 50Q146 51 150 54" stroke="#120904" stroke-width="1.51" stroke-linecap="round" fill="none"/><path d="M146 56Q149 57 153 60" stroke="#120904" stroke-width="1.05" stroke-linecap="round" fill="none"/><path d="M149 62Q152 63 156 66" stroke="#120904" stroke-width="1.05" stroke-linecap="round" fill="none"/><path d="M151 68Q154 69 158 72" stroke="#120904" stroke-width="1.17" stroke-linecap="round" fill="none"/><path d="M153 74Q156 75 160 78" stroke="#120904" stroke-width="1.13" stroke-linecap="round" fill="none"/><path d="M41.0 60Q45.0 62 49.0 61" stroke="#120904" stroke-width="1.4" stroke-linecap="round" fill="none"/><path d="M37.6 65.5Q41.6 67.5 45.6 66.5" stroke="#120904" stroke-width="1.4" stroke-linecap="round" fill="none"/><path d="M34.2 71Q38.2 73 42.2 72" stroke="#120904" stroke-width="1.4" stroke-linecap="round" fill="none"/><path d="M30.8 76.5Q34.8 78.5 38.8 77.5" stroke="#120904" stroke-width="1.4" stroke-linecap="round" fill="none"/><path d="M27.4 82Q31.4 84 35.4 83" stroke="#120904" stroke-width="1.4" stroke-linecap="round" fill="none"/><path d="M23.9 87.5Q27.9 89.5 31.9 88.5" stroke="#120904" stroke-width="1.4" stroke-linecap="round" fill="none"/><path d="M107.5 58Q114 60.2 121.5 57.5" stroke="#120904" stroke-width="1.5" stroke-linecap="round" fill="none"/><path d="M107.5 63.5Q114 65.7 121.5 63.0" stroke="#120904" stroke-width="1.5" stroke-linecap="round" fill="none"/><path d="M107.5 69Q114 71.2 121.5 68.5" stroke="#120904" stroke-width="1.5" stroke-linecap="round" fill="none"/><path d="M107.5 74.5Q114 76.7 121.5 74.0" stroke="#120904" stroke-width="1.5" stroke-linecap="round" fill="none"/><path d="M107.5 80Q114 82.2 121.5 79.5" stroke="#120904" stroke-width="1.5" stroke-linecap="round" fill="none"/><path d="M107.5 85.5Q114 87.7 121.5 85.0" stroke="#120904" stroke-width="1.5" stroke-linecap="round" fill="none"/>
<path d="M18 97L28 98M68 98L84 97M106 93L118 93" stroke="#e8c898" stroke-width="2.5"/>
</svg>
<div class="t" style="left:867.6px;top:461.86px;font-size:7.84px;color:#202122;font-weight:400;font-family:'Liberation Sans';font-style:normal;">(<i>P. tigris tigris</i>)</div>
<div class="r" style="left:808.8px;top:474.9px;width:166.7px;height:14.9px;background:#d3d3a4;"></div>
<div class="t" style="left:861px;top:477.03px;font-size:9.65px;color:#b3322a;font-weight:700;font-family:'Liberation Sans';font-style:normal;">Амандық күйі</div>
<div class="t" style="left:824.2px;top:499.08px;font-size:6.4px;color:#555;font-weight:400;font-family:'Liberation Sans';font-style:normal;">Extinct</div>
<div class="t" style="left:874px;top:499.08px;font-size:6.4px;color:#555;font-weight:400;font-family:'Liberation Sans';font-style:normal;">Threatened</div>
<div class="t" style="left:940px;top:492.98px;font-size:6.4px;color:#555;font-weight:400;font-family:'Liberation Sans';font-style:normal;">Least</div>
<div class="t" style="left:935.4px;top:499.08px;font-size:6.4px;color:#555;font-weight:400;font-family:'Liberation Sans';font-style:normal;">Concern</div>
<div class="r" style="left:833.5px;top:506.5px;width:0.8px;height:3.5px;background:#555;"></div>
<div class="r" style="left:948.9px;top:506.5px;width:0.8px;height:3.5px;background:#555;"></div>
<svg class="r" style="left:863px;top:505px;" width="56" height="8" viewBox="0 0 56 8" fill="none"><path d="M1 6C1 3 3 2.5 6 2.5H24C26 2.5 27.5 2 28 0.8C28.5 2 30 2.5 32 2.5H50C53 2.5 55 3 55 6" stroke="#333" stroke-width="1.1"/></svg>
<div class="r" style="left:825.4px;top:512.5px;width:15.4px;height:15.4px;background:#fff;box-sizing:border-box;border:0.8px solid #aaa;border-radius:50%"></div>
<div class="t" style="left:825.4px;top:517.3px;width:15.4px;text-align:center;font-size:6.9px;font-weight:700;color:#333">EX</div>
<div class="r" style="left:844.5px;top:512.5px;width:15.4px;height:15.4px;background:#fff;box-sizing:border-box;border:0.8px solid #aaa;border-radius:50%"></div>
<div class="t" style="left:844.5px;top:517.3px;width:15.4px;text-align:center;font-size:6.9px;font-weight:700;color:#333">EW</div>
<div class="r" style="left:863.8px;top:512.5px;width:15.4px;height:15.4px;background:#fff;box-sizing:border-box;border:0.8px solid #aaa;border-radius:50%"></div>
<div class="t" style="left:863.8px;top:517.3px;width:15.4px;text-align:center;font-size:6.9px;font-weight:700;color:#333">CR</div>
<div class="r" style="left:883.1999999999999px;top:512.5px;width:15.4px;height:15.4px;background:#c8581f;border-radius:50%"></div>
<div class="t" style="left:883.1999999999999px;top:517.3px;width:15.4px;text-align:center;font-size:6.9px;font-weight:700;color:#f0b08a">EN</div>
<div class="r" style="left:903.0999999999999px;top:512.5px;width:15.4px;height:15.4px;background:#fff;box-sizing:border-box;border:0.8px solid #aaa;border-radius:50%"></div>
<div class="t" style="left:903.0999999999999px;top:517.3px;width:15.4px;text-align:center;font-size:6.9px;font-weight:700;color:#333">VU</div>
<div class="r" style="left:921.5px;top:512.5px;width:15.4px;height:15.4px;background:#fff;box-sizing:border-box;border:0.8px solid #aaa;border-radius:50%"></div>
<div class="t" style="left:921.5px;top:517.3px;width:15.4px;text-align:center;font-size:6.9px;font-weight:700;color:#333">NT</div>
<div class="r" style="left:941.1999999999999px;top:512.5px;width:15.4px;height:15.4px;background:#fff;box-sizing:border-box;border:0.8px solid #aaa;border-radius:50%"></div>
<div class="t" style="left:941.1999999999999px;top:517.3px;width:15.4px;text-align:center;font-size:6.9px;font-weight:700;color:#333">LC</div>
<div class="t" style="left:825.7px;top:533.20px;font-size:9.1px;color:#b3322a;font-weight:400;font-family:'Liberation Sans';font-style:normal;">Жойылу қаупіндегілер <span style="font-size:8px;color:#3a4a6a">(IUCN)</span> <span style="font-size:6.5px;color:#3366cc;position:relative;top:-4px">[1]</span></div>
<div class="r" style="left:808.8px;top:547.5px;width:166.7px;height:14.9px;background:#d3d3a4;"></div>
<div class="t" style="left:840.3px;top:549.67px;font-size:9.6px;color:#b3322a;font-weight:700;font-family:'Liberation Sans';font-style:normal;">Ғылыми топтастыруы</div>
<div class="t" style="left:827.2px;top:569.73px;font-size:9.3px;color:#202122;font-weight:400;font-family:'Liberation Sans';font-style:normal;">Дүниесі:</div>
<div class="t" style="left:882.9px;top:569.73px;font-size:9.3px;color:#3366cc;font-weight:400;font-family:'Liberation Sans';font-style:normal;">Жануарлар</div>
<div class="t" style="left:827.2px;top:587.43px;font-size:9.3px;color:#202122;font-weight:400;font-family:'Liberation Sans';font-style:normal;">Жамағаты:</div>
<div class="t" style="left:882.9px;top:587.43px;font-size:9.3px;color:#3366cc;font-weight:400;font-family:'Liberation Sans';font-style:normal;">Хордалылар</div>
<div class="t" style="left:827.2px;top:605.13px;font-size:9.3px;color:#202122;font-weight:400;font-family:'Liberation Sans';font-style:normal;">Табы:</div>
<div class="t" style="left:882.9px;top:605.13px;font-size:9.3px;color:#3366cc;font-weight:400;font-family:'Liberation Sans';font-style:normal;">Сүтқоректілер</div>
<div class="t" style="left:827.2px;top:622.83px;font-size:9.3px;color:#202122;font-weight:400;font-family:'Liberation Sans';font-style:normal;">Сабы:</div>
<div class="t" style="left:882.9px;top:622.83px;font-size:9.3px;color:#3366cc;font-weight:400;font-family:'Liberation Sans';font-style:normal;">Жыртқыштар</div>
<div class="t" style="left:827.2px;top:640.53px;font-size:9.3px;color:#202122;font-weight:400;font-family:'Liberation Sans';font-style:normal;">Тұқымдасы:</div>
<div class="t" style="left:882.9px;top:640.53px;font-size:9.3px;color:#3366cc;font-weight:400;font-family:'Liberation Sans';font-style:normal;">Мысықтәрізділер</div>
<div class="t" style="left:827.2px;top:658.23px;font-size:9.3px;color:#202122;font-weight:400;font-family:'Liberation Sans';font-style:normal;">Тегі:</div>
<div class="t" style="left:882.9px;top:658.23px;font-size:9.3px;color:#3366cc;font-weight:400;font-family:'Liberation Sans';font-style:normal;"><i>Panthera</i></div>
<div class="t" style="left:827.2px;top:675.93px;font-size:9.3px;color:#202122;font-weight:400;font-family:'Liberation Sans';font-style:normal;">Түрі:</div>
<div class="t" style="left:882.9px;top:675.93px;font-size:9.3px;color:#202122;font-weight:400;font-family:'Liberation Sans';font-style:normal;"><b><i>P. tigris</i></b></div>
<div class="r" style="left:808.8px;top:692.7px;width:166.7px;height:14.8px;background:#d3d3a4;"></div>
<div class="t" style="left:854.5px;top:695.09px;font-size:9.7px;color:#b3322a;font-weight:700;font-family:'Liberation Sans';font-style:normal;">Екі-есімді атауы</div>
<div class="r" style="left:163px;top:709px;width:1096px;height:11px;background:#d0d0d0;"></div>
<div class="r" style="left:126px;top:709px;width:37px;height:11px;background:#d0d0d0;"></div>
</body></html>
